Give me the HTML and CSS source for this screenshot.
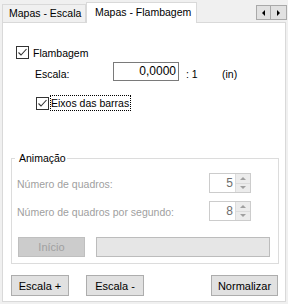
FILE: index.html
```html
<!DOCTYPE html>
<html lang="pt">
<head>
  <meta charset="UTF-8">
  <title>Mapas - Flambagem</title>
  <link rel="stylesheet" href="styles.css">
</head>
<body>
  <div class="tabs">
    <div class="tab">Mapas - Escala</div>
    <div class="tab active">Mapas - Flambagem</div>
    <div class="scroller">
      <span class="scroll-btn"><i class="tri-left"></i></span>
      <span class="scroll-btn"><i class="tri-right"></i></span>
    </div>
  </div>

  <div class="page">
    <label class="check flamb">
      <svg class="box" width="13" height="13" viewBox="0 0 13 13"><rect x="0.5" y="0.5" width="12" height="12" fill="#fff" stroke="#333"/><path d="M2.5 6.5 L5 9 L10.5 3" fill="none" stroke="#333" stroke-width="1.1"/></svg>
      <span>Flambagem</span>
    </label>

    <div class="scale-row">
      <span class="scale-label">Escala:</span>
      <input class="scale-input" type="text" value="0,0000">
      <span class="ratio">: 1</span>
      <span class="unit">(in)</span>
    </div>

    <label class="check eixos">
      <svg class="box" width="13" height="13" viewBox="0 0 13 13"><rect x="0.5" y="0.5" width="12" height="12" fill="#fff" stroke="#333"/><path d="M2.5 6.5 L5 9 L10.5 3" fill="none" stroke="#333" stroke-width="1.1"/></svg>
      <span class="focus">Eixos das barras</span>
    </label>

    <fieldset class="group">
      <legend>Animação</legend>
      <div class="spin-row first">
        <span>Número de quadros:</span>
        <div class="spin"><span class="spin-val">5</span><span class="spin-btns"><i class="up"></i><i class="down"></i></span></div>
      </div>
      <div class="spin-row">
        <span>Número de quadros por segundo:</span>
        <div class="spin"><span class="spin-val">8</span><span class="spin-btns"><i class="up"></i><i class="down"></i></span></div>
      </div>
      <div class="play-row">
        <button class="btn disabled">Início</button>
        <div class="progress"></div>
      </div>
    </fieldset>

    <div class="actions">
      <button class="btn small">Escala +</button>
      <button class="btn small">Escala -</button>
      <button class="btn wide">Normalizar</button>
    </div>
  </div>
</body>
</html>
```

FILE: styles.css
```css
body { margin: 0; width: 288px; height: 304px; background: #f0f0f0; font: 10.5px "Liberation Sans", Arial, sans-serif; color: #000; overflow: hidden; }

/* tab strip */
.tabs { display: flex; align-items: flex-end; height: 22px; padding-left: 2px; }
.tab { box-sizing: border-box; height: 18px; width: 84px; border: 1px solid #d9d9d9; border-bottom: none; background: #f0f0f0; padding: 2px 0 0 6px; white-space: nowrap; }
.tab.active { position: relative; z-index: 1; width: 111px; height: 21px; margin-bottom: -1px; background: #fff; padding: 3px 0 0 8px; }
.scroller { display: flex; align-self: flex-start; margin: 5px 1px 0 auto; }
.scroll-btn { box-sizing: border-box; width: 15px; height: 15px; border: 1px solid #a9a9a9; background: #e1e1e1; display: flex; align-items: center; justify-content: center; }
.scroll-btn + .scroll-btn { width: 16px; border-left: none; }
.tri-left { width: 0; height: 0; border-top: 3px solid transparent; border-bottom: 3px solid transparent; border-right: 3px solid #000; }
.tri-right { width: 0; height: 0; border-top: 3px solid transparent; border-bottom: 3px solid transparent; border-left: 3px solid #000; }

/* tab page */
.page { box-sizing: border-box; height: 280px; margin: 0 2px; border: 1px solid #d9d9d9; background: #fff; padding: 0 6px 0 8px; }

.check { display: flex; align-items: center; }
.box { flex: none; }
.flamb { margin: 23px 0 0 5px; height: 13px; gap: 4px; }
.eixos { margin: 14px 0 0 25px; height: 16px; gap: 1px; }
.focus { border: 1px dotted #000; padding: 0 1px 0 0; line-height: 14px; }

.scale-row { display: flex; align-items: center; height: 19px; margin-top: 3px; }
.scale-label { width: 78px; padding-left: 24px; padding-top: 4px; }
.scale-input { box-sizing: border-box; width: 66px; height: 19px; margin: 0; border: 1px solid #7a7a7a; padding: 0 2px 1px 0; font: inherit; font-size: 12px; text-align: right; color: #000; outline: none; }
.ratio { margin-left: 7px; width: 36px; padding-top: 4px; }
.unit { padding-top: 5px; }

/* group box */
.group { margin: 41px 0 0; padding: 0 27px 6px 5px; border: 1px solid #dcdcdc; min-width: 0; }
.group legend { margin-left: -2px; padding: 0 1px 0 4px; line-height: 13px; color: #000; }
.spin-row { display: flex; align-items: center; justify-content: space-between; height: 20px; margin-top: 8px; color: #a0a0a0; }
.spin-row span:first-child { padding-top: 2px; }
.spin { box-sizing: border-box; display: flex; width: 42px; height: 20px; border: 1px solid #cccccc; background: #fff; }
.spin-val { flex: 1; text-align: right; padding: 2px 2px 0 0; color: #6d6d6d; font-size: 12px; }
.spin-btns { width: 14px; display: flex; flex-direction: column; background: #ececec; border-left: 1px solid #dcdcdc; }
.spin-btns i { flex: 1; display: flex; align-items: center; justify-content: center; }
.spin-btns i + i { border-top: 1px solid #dcdcdc; }
.up::before { content: ""; border-left: 3px solid transparent; border-right: 3px solid transparent; border-bottom: 3px solid #a0a0a0; }
.down::before { content: ""; border-left: 3px solid transparent; border-right: 3px solid transparent; border-top: 3px solid #a0a0a0; }

.play-row { display: flex; margin-top: 16px; height: 20px; }
.progress { flex: none; box-sizing: border-box; width: 174px; height: 20px; margin-left: 11px; border: 1px solid #bcbcbc; background: #e6e6e6; }

/* buttons */
.btn { box-sizing: border-box; height: 21px; margin: 0; padding: 0; border: 1px solid #adadad; background: #e1e1e1; font: inherit; font-size: 11px; color: #000; }
.btn.disabled { flex: none; width: 67px; height: 20px; margin-left: 1px; background: #cccccc; border-color: #bfbfbf; color: #a0a0a0; }
.actions { display: flex; margin-top: 11px; }
.btn.small { width: 58px; }
.btn.small + .btn.small { margin-left: 17px; }
.btn.wide { width: 67px; margin: 0 1px 0 auto; }
```
